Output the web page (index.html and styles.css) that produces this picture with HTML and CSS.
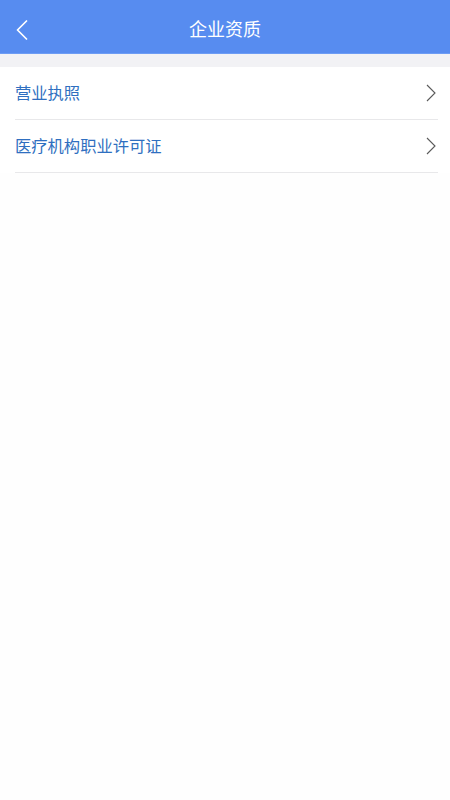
FILE: index.html
```html
<!DOCTYPE html>
<html lang="zh">
<head>
<meta charset="utf-8">
<link rel="stylesheet" href="styles.css">
</head>
<body>
<header class="nav">
  <span class="back"><svg width="14" height="20" viewBox="0 0 14 20"><path d="M11.5 1 L2.5 10 L11.5 19" fill="none" stroke="#fff" stroke-width="1.7" stroke-linecap="round" stroke-linejoin="round"/></svg></span>
  <h1 class="title">企业资质</h1>
</header>
<div class="gap"></div>
<ul class="list">
  <li class="row"><span class="label">营业执照</span><svg class="chev" width="10" height="18" viewBox="0 0 10 18"><path d="M1 1 L9 9 L1 17" fill="none" stroke="#5a5a5a" stroke-width="1.1"/></svg></li>
  <li class="row"><span class="label">医疗机构职业许可证</span><svg class="chev" width="10" height="18" viewBox="0 0 10 18"><path d="M1 1 L9 9 L1 17" fill="none" stroke="#5a5a5a" stroke-width="1.1"/></svg></li>
</ul>
</body>
</html>
```
FILE: styles.css
```css
html, body { margin: 0; padding: 0; }
body {
  background: #fefefe;
  font-family: "Noto Sans CJK SC", "Noto Sans", sans-serif;
  width: 450px;
  min-height: 800px;
}
.nav {
  height: 53px;
  background: #578cf0;
  border-bottom: 1px solid #6d9cf4;
  display: flex;
  align-items: center;
  justify-content: center;
  position: relative;
}
.back {
  position: absolute;
  left: 15px;
  top: 20px;
  display: flex;
}
.title {
  margin: 0;
  padding-top: 3px;
  color: #fff;
  font-size: 18px;
  font-weight: 400;
  line-height: 1;
}
.gap {
  height: 13px;
  background: #f2f2f5;
}
.list {
  list-style: none;
  margin: 0;
  padding: 0 12px 0 15px;
  background: #fff;
}
.row {
  height: 52px;
  border-bottom: 1px solid #e8e8ea;
  display: flex;
  align-items: center;
  justify-content: space-between;
}
.label {
  color: #2f6fc0;
  font-size: 16.3px;
  line-height: 1;
  padding-bottom: 1px;
}
.chev { margin-right: 2px; }
```
